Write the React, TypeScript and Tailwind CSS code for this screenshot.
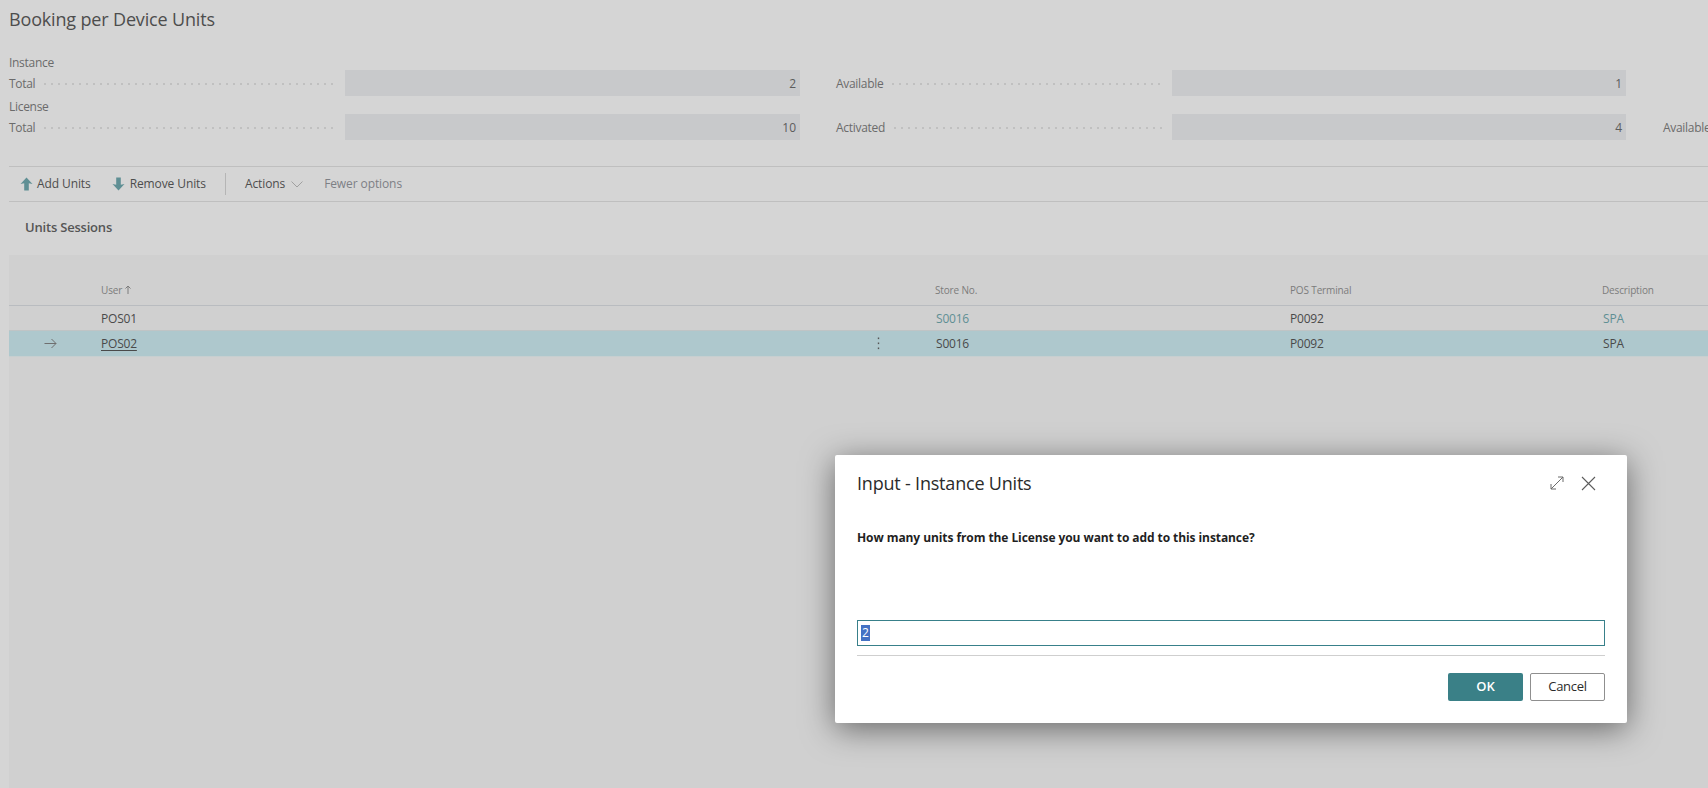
import React from "react";

const font = { fontFamily: '"Open Sans", "Noto Sans", sans-serif' };

function Field({ label, value, labelW, fieldW }: { label: string; value: string; labelW: string; fieldW: string }) {
  return (
    <div className="flex items-center h-[26px]">
      <div className={`flex items-center shrink-0 ${labelW}`}>
        <span className="text-[12px] pt-[2px] tracking-[-0.3px] text-[#6b6b6b] mr-[9px]">{label}</span>
        <span className="flex-1 mr-[8px] mt-[1px] h-[2px] bg-[repeating-linear-gradient(90deg,#c0c0c0_0,#c0c0c0_2px,transparent_2px,transparent_7px)]" />
      </div>
      <div className={`h-[26px] bg-[#c8c9cb] shrink-0 flex items-center justify-end pr-[4px] pt-[1px] text-[12px] text-[#5c5c5c] ${fieldW}`}>{value}</div>
    </div>
  );
}

function ArrowThick({ down }: { down?: boolean }) {
  return (
    <svg width="13" height="14" viewBox="0 0 13 14" className={down ? "rotate-180" : ""}>
      <path d="M6.5 0.5 L12.5 7 L8.8 6.2 L8.8 13.5 L4.2 13.5 L4.2 6.2 L0.5 7 Z" fill="#5f8f94" />
    </svg>
  );
}

function Row({ selected }: { selected?: boolean }) {
  const link = selected ? "text-[#4a4a4a]" : "text-[#5f8f94]";
  return (
    <div className={`flex items-center text-[12px] text-[#4a4a4a] tracking-[-0.2px] ${selected ? "h-[26px] bg-[#aec8cd] border-b border-[#c6cfd0]" : "h-[25px] pt-[1px] border-b border-[#bfc4c5]"}`}>
      <div className="w-[92px] shrink-0 pl-[35px] flex items-center">
        {selected && (
          <svg width="13" height="11" viewBox="0 0 13 11" fill="none" stroke="#6f6f6f" strokeWidth="1">
            <path d="M0.5 5.5H12M7.5 1L12 5.5L7.5 10" />
          </svg>
        )}
      </div>
      <div className="w-[834px] shrink-0 flex items-center justify-between pr-[55px]">
        <span className={selected ? "underline underline-offset-2" : ""}>{selected ? "POS02" : "POS01"}</span>
        {selected && (
          <svg width="3" height="13" viewBox="0 0 3 13" fill="#555">
            <rect x="0.8" y="0.5" width="1.4" height="1.6" />
            <rect x="0.8" y="5.5" width="1.4" height="1.6" />
            <rect x="0.8" y="10.5" width="1.4" height="1.6" />
          </svg>
        )}
      </div>
      <div className="w-[355px] shrink-0 pl-[1px]"><span className={link}>S0016</span></div>
      <div className="w-[312px] shrink-0"><span>P0092</span></div>
      <div className="pl-[1px]"><span className={link}>SPA</span></div>
    </div>
  );
}

export default function App() {
  return (
    <div style={font} className="relative w-[1708px] h-[788px] overflow-hidden bg-[#d5d5d5]">
      <h1 className="h-[38px] pl-[9px] pt-[6px] text-[18px] leading-[26px] font-normal text-[#4d4d4d] tracking-[-0.16px]">Booking per Device Units</h1>

      <div className="pl-[9px] pt-[16px] w-[1780px]">
        <div className="h-[16px] pt-[1px] text-[12px] leading-[16px] tracking-[-0.3px] text-[#6b6b6b]">Instance</div>
        <div className="flex">
          <Field label="Total" value="2" labelW="w-[336px]" fieldW="w-[455px]" />
          <div className="w-[36px] shrink-0" />
          <Field label="Available" value="1" labelW="w-[336px]" fieldW="w-[454px]" />
        </div>
        <div className="h-[18px] pt-[2px] text-[12px] leading-[18px] tracking-[-0.3px] text-[#6b6b6b]">License</div>
        <div className="flex">
          <Field label="Total" value="10" labelW="w-[336px]" fieldW="w-[455px]" />
          <div className="w-[36px] shrink-0" />
          <Field label="Activated" value="4" labelW="w-[336px]" fieldW="w-[454px]" />
          <div className="w-[37px] shrink-0" />
          <span className="text-[12px] pt-[1px] leading-[26px] tracking-[-0.3px] text-[#6b6b6b]">Available</span>
        </div>
      </div>

      <div className="ml-[9px] mt-[25px] h-[36px] border-y border-[#bfbfbf] flex items-center pl-[11px] text-[12px] tracking-[-0.1px] text-[#4d4d4d]">
        <ArrowThick />
        <span className="ml-[4px]">Add Units</span>
        <span className="ml-[21px]"><ArrowThick down /></span>
        <span className="ml-[5px]">Remove Units</span>
        <span className="w-px h-[22px] bg-[#b5b5b5] ml-[19px] mr-[19px]" />
        <span>Actions</span>
        <svg width="12" height="7" viewBox="0 0 12 7" fill="none" stroke="#a0a0a0" strokeWidth="1" className="ml-[6px]"><path d="M0.5 0.5L6 6L11.5 0.5" /></svg>
        <span className="ml-[21px] text-[#7d8085]">Fewer options</span>
      </div>

      <div className="ml-[25px] h-[53px] pb-[2px] flex items-center text-[13px] font-semibold tracking-[-0.2px] text-[#555]">Units Sessions</div>

      <div className="ml-[9px] w-[1699px] h-[534px] bg-[#d0d0d0]">
        <div className="h-[51px] pt-[27px] flex text-[10px] leading-[16px] tracking-[-0.15px] text-[#7c7c7c] border-b border-[#b9bcc0]">
          <div className="w-[92px] shrink-0" />
          <div className="w-[834px] shrink-0 flex items-start">User
            <svg width="6" height="9" viewBox="0 0 6 9" fill="none" stroke="#7c7c7c" className="ml-[3px] mt-[3px]"><path d="M3 9V1M0.5 3.5L3 1L5.5 3.5" /></svg>
          </div>
          <div className="w-[355px] shrink-0">Store No.</div>
          <div className="w-[312px] shrink-0">POS Terminal</div>
          <div>Description</div>
        </div>
        <Row />
        <Row selected />
      </div>

      <div className="absolute left-[835px] top-[455px] w-[792px] h-[268px] bg-white rounded-[2px] shadow-[0_6px_32px_rgba(0,0,0,0.5)] px-[22px] flex flex-col">
        <div className="h-[56px] flex items-center justify-between pr-[9px]">
          <span className="text-[18px] font-medium tracking-[-0.2px] text-[#2b2b2b]">Input - Instance Units</span>
          <span className="flex items-center gap-[17px]">
            <svg width="14" height="14" viewBox="0 0 14 14" fill="none" stroke="#6b6b6b" strokeWidth="1"><path d="M1 13L13 1M8 1H13V6M1 8V13H6" /></svg>
            <svg width="15" height="15" viewBox="0 0 15 15" fill="none" stroke="#5c5c5c" strokeWidth="1.1"><path d="M1 1L14 14M14 1L1 14" /></svg>
          </span>
        </div>
        <div className="h-[52px] pt-[18px] text-[12px] leading-[18px] font-bold tracking-[-0.08px] text-[#1f1f1f]">How many units from the License you want to add to this instance?</div>
        <div className="mt-[57px] h-[26px] border border-[#38808a] flex items-center pl-[3px] text-[12px]">
          <span className="bg-[#4472c4] text-white leading-[16px] px-px">2</span>
        </div>
        <div className="mt-[9px] h-px bg-[#cfcfcf]" />
        <div className="mt-[17px] flex justify-end gap-[7px]">
          <button className="w-[75px] h-[28px] bg-[#3a8087] rounded-[2px] text-[13px] font-semibold text-white">OK</button>
          <button className="w-[75px] h-[28px] bg-white border border-[#8f8f8f] rounded-[2px] text-[13px] tracking-[-0.3px] text-[#2b2b2b]">Cancel</button>
        </div>
      </div>
    </div>
  );
}
